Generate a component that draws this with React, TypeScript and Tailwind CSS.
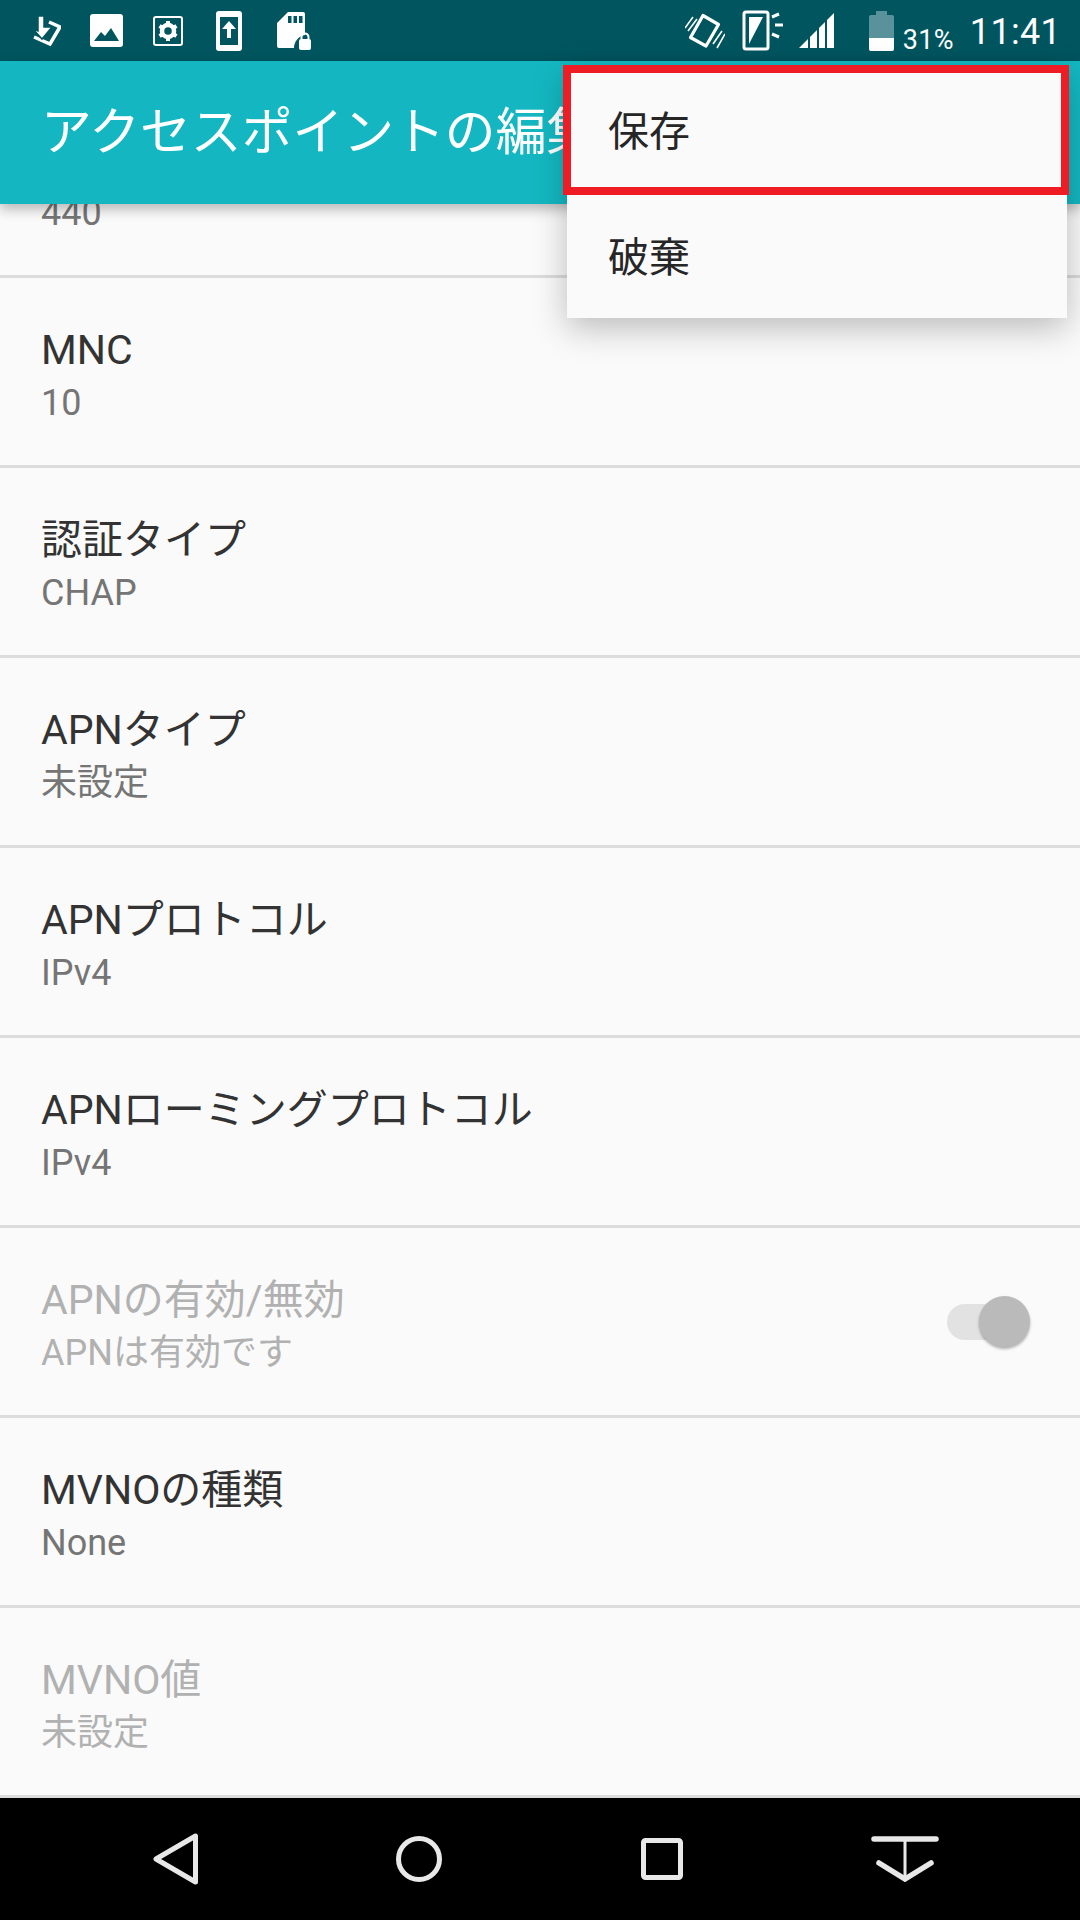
import React from 'react'

// Settings rows: the first one is scrolled under the toolbar
const ROWS = [
    { title: 'MCC', value: '440' },
    { title: 'MNC', value: '10' },
    { title: '認証タイプ', value: 'CHAP' },
    { title: 'APNタイプ', value: '未設定' },
    { title: 'APNプロトコル', value: 'IPv4' },
    { title: 'APNローミングプロトコル', value: 'IPv4' },
    { title: 'APNの有効/無効', value: 'APNは有効です', disabled: true, toggle: true },
    { title: 'MVNOの種類', value: 'None' },
    { title: 'MVNO値', value: '未設定', disabled: true },
]

const FONT = 'font-["Roboto","Noto_Sans_CJK_JP",sans-serif]'

function Row({ title, value, disabled, toggle }: { title: string; value: string; disabled?: boolean; toggle?: boolean }) {
    return (
        <div className="h-[190px] shrink-0 flex items-center justify-between pl-[41px] pr-[61px] border-b-[3px] border-[#dcdcdc]">
            <div className="flex flex-col pt-[8px]">
                <div className={`text-[41px] leading-[54px] ${disabled ? 'text-[#b1b1b1]' : 'text-[#333333]'}`}>{title}</div>
                <div className={`text-[36px] leading-[52px] ${disabled ? 'text-[#b1b1b1]' : 'text-[#757575]'}`}>{value}</div>
            </div>
            {toggle && (
                <div className="relative w-[72px] h-[36px] rounded-full bg-[#e2e2e2]">
                    <div className="absolute right-[-11px] top-[-8px] w-[51px] h-[51px] rounded-full bg-[#bababa] shadow-[0_2px_3px_rgba(0,0,0,0.3)]" />
                </div>
            )}
        </div>
    )
}

function StatusIcons() {
    return (
        <div className="flex items-center text-white">
            <svg className="ml-[31px]" width="30" height="32" viewBox="0 0 30 32" fill="none">
                <path d="M3 22 L19 29 L29 12 L18 7" stroke="white" strokeWidth="3.5" />
                <path d="M2 14 L11 24 L21 12 H13 V1 H7 V16 Z" fill="white" stroke="#00555f" strokeWidth="1.5" />
            </svg>
            <svg className="ml-[29px]" width="33" height="33" viewBox="0 0 33 33">
                <rect width="33" height="33" rx="3" fill="white" />
                <path d="M4 27 L11 18 L15 22 L21 14 L29 27 Z" fill="#00555f" />
            </svg>
            <svg className="ml-[30px]" width="30" height="30" viewBox="0 0 30 30" fill="none">
                <rect x="1" y="1" width="28" height="28" rx="2" stroke="white" strokeWidth="2" />
                <circle cx="15" cy="15" r="6" stroke="white" strokeWidth="4.5" />
                <path d="M15 5 V9 M15 21 V25 M6.5 10 L10 12 M20 18 L23.5 20 M23.5 10 L20 12 M10 18 L6.5 20" stroke="white" strokeWidth="4" />
            </svg>
            <svg className="ml-[33px]" width="26" height="40" viewBox="0 0 26 40">
                <rect width="26" height="40" rx="3" fill="white" />
                <rect x="4" y="6" width="18" height="28" fill="#00555f" />
                <path d="M13 10 L20 18 H15 V27 H11 V18 H6 Z" fill="white" />
            </svg>
            <svg className="ml-[34px]" width="36" height="40" viewBox="0 0 36 40">
                <path d="M12 1 H27 Q29 1 29 3 V24 A13 13 0 0 0 18 37 H3 Q1 37 1 35 V12 Z" fill="white" />
                <rect x="12" y="5" width="3.5" height="7" fill="#00555f" />
                <rect x="17.5" y="5" width="3.5" height="7" fill="#00555f" />
                <rect x="23" y="5" width="3.5" height="7" fill="#00555f" />
                <rect x="23" y="28" width="12" height="11" rx="2" fill="white" />
                <path d="M25.5 28 V26 A3.5 3.5 0 0 1 32.5 26 V28" stroke="white" strokeWidth="2" fill="none" />
            </svg>
        </div>
    )
}

function StatusRight() {
    return (
        <div className="flex items-center text-white">
            <svg width="40" height="40" viewBox="0 0 40 40" fill="none" stroke="white">
                <path d="M18 4.5 L33.5 13.5 L21 35 L5.5 26.5 Z" strokeWidth="3.2" strokeLinejoin="round" />
                <path d="M8 6 L0 17 M12 8 L3 20 M40 23 L32 37 M37 20 L28 33" strokeWidth="1.6" />
            </svg>
            <svg className="ml-[17px]" width="41" height="41" viewBox="0 0 41 41" fill="none">
                <rect x="2" y="2" width="24" height="37" rx="2" stroke="white" strokeWidth="3" />
                <path d="M7 34 V7 H21 Z" fill="white" />
                <path d="M30 7 L37 4 M33 15 H41 M30 24 L37 27" stroke="white" strokeWidth="3" />
            </svg>
            <svg className="ml-[16px]" width="36" height="35" viewBox="0 0 36 35" fill="white">
                <path d="M0 35 L9 26 V35 Z" />
                <path d="M11 24 L18 17 V35 H11 Z" />
                <path d="M20 15 L26 9 V35 H20 Z" />
                <path d="M28 7 L35 0 V35 H28 Z" />
            </svg>
            <svg className="ml-[34px]" width="25" height="40" viewBox="0 0 25 40">
                <path d="M7 0 H18 V4 H23 Q25 4 25 6 V38 Q25 40 23 40 H2 Q0 40 0 38 V6 Q0 4 2 4 H7 Z" fill="#5a929b" />
                <path d="M0 27 H25 V38 Q25 40 23 40 H2 Q0 40 0 38 Z" fill="white" />
            </svg>
            <span className="ml-[9px] mt-[18px] text-[27px] leading-[30px] tracking-[0.3px]">31%</span>
            <span className="ml-[16px] mt-[2px] mr-[19px] text-[36px] leading-[44px] tracking-[0.3px]">11:41</span>
        </div>
    )
}

export default function App() {
    return (
        <div className={`relative w-[1080px] h-[1920px] overflow-hidden flex flex-col bg-[#fafafa] ${FONT}`}>
            <div className="h-[61px] shrink-0 flex items-center justify-between bg-[#00555f]">
                <StatusIcons />
                <StatusRight />
            </div>

            <div className="relative z-10 h-[143px] shrink-0 flex items-center pl-[41px] pt-[2px] bg-[#14b7c1] text-white text-[50.8px] shadow-[0_5px_12px_rgba(0,0,0,0.28)]">
                アクセスポイントの編集
            </div>

            <div className="flex-1 min-h-0 overflow-hidden">
                <div className="flex flex-col mt-[-116px]">
                    {ROWS.map((row) => (
                        <Row key={row.title} {...row} />
                    ))}
                </div>
            </div>

            <div className="h-[122px] shrink-0 grid grid-cols-4 items-center px-[54px] bg-black">
                <svg className="justify-self-center" width="46" height="52" viewBox="0 0 46 52" fill="none" stroke="#e8e8e8" strokeWidth="5" strokeLinejoin="round">
                    <path d="M42.5 3 V49 L3 26 Z" />
                </svg>
                <svg className="justify-self-center" width="46" height="46" viewBox="0 0 46 46" fill="none" stroke="#e8e8e8" strokeWidth="5">
                    <circle cx="23" cy="23" r="20.5" />
                </svg>
                <svg className="justify-self-center" width="42" height="42" viewBox="0 0 42 42" fill="none" stroke="#e8e8e8" strokeWidth="5">
                    <rect x="2.5" y="2.5" width="37" height="37" rx="2" />
                </svg>
                <svg className="justify-self-center" width="68" height="46" viewBox="0 0 68 46" fill="none" stroke="#e8e8e8" strokeLinecap="round">
                    <path d="M3 3 H65" strokeWidth="5.5" />
                    <path d="M34 4 V42" strokeWidth="3" />
                    <path d="M8 27 L34 43 L60 27" strokeWidth="5.5" />
                </svg>
            </div>

            {/* Overflow menu over the toolbar */}
            <div className="absolute z-20 left-[567px] top-[66px] w-[500px] flex flex-col bg-[#fafafa] text-[#262626] text-[41px] shadow-[0_10px_32px_rgba(0,0,0,0.25)]">
                <div className="h-[133px] flex items-center pl-[41px]">保存</div>
                <div className="h-[119px] flex items-center pl-[41px]">破棄</div>
            </div>
            <div className="absolute z-30 left-[563px] top-[65px] w-[506px] h-[130px] border-[8px] border-[#ee1c25]" />
        </div>
    )
}
